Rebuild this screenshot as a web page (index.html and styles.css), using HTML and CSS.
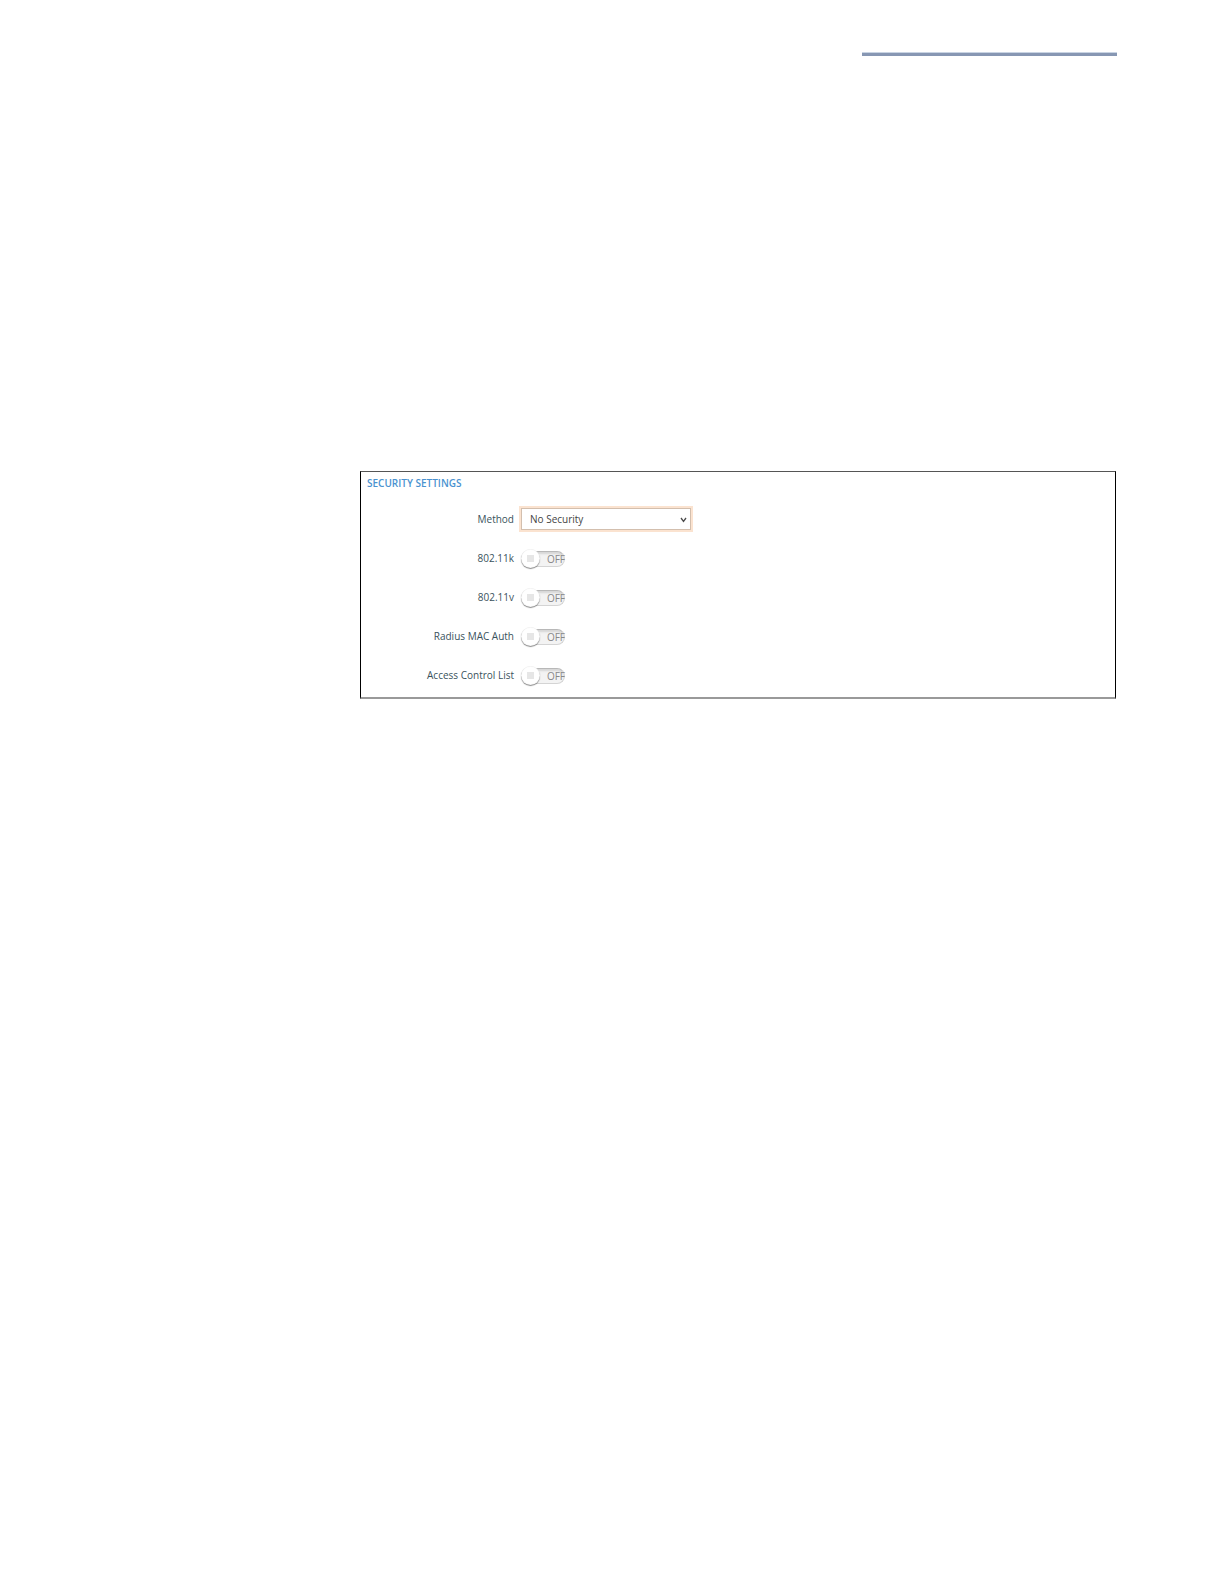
FILE: index.html
```html
<!DOCTYPE html>
<html lang="en">
<head>
    <meta charset="UTF-8">
    <meta name="viewport" content="width=device-width, initial-scale=1.0">
    <title>Security Settings</title>
    <link rel="stylesheet" href="styles.css">
</head>
<body>
    <!-- Header rule -->
    <header class="page-header">
        <hr class="header-rule">
    </header>

    <main class="content">
        <form class="panel">
            <h1>SECURITY SETTINGS</h1>

            <div class="row">
                <label for="method">Method</label>
                <div class="select-wrap">
                    <select id="method">
                        <option>No Security</option>
                    </select>
                    <svg class="arrow" viewBox="0 0 7 6" aria-hidden="true">
                        <path d="M1 1 L3.5 4.4 L6 1" fill="none" stroke="#4c4c4c" stroke-width="1.3"/>
                    </svg>
                </div>
            </div>

            <!-- Switches -->
            <div class="row">
                <label for="dot11k">802.11k</label>
                <div class="switch">
                    <input type="checkbox" id="dot11k">
                    <span class="state">OFF</span>
                </div>
            </div>
            <div class="row">
                <label for="dot11v">802.11v</label>
                <div class="switch">
                    <input type="checkbox" id="dot11v">
                    <span class="state">OFF</span>
                </div>
            </div>
            <div class="row">
                <label for="macAuth">Radius MAC Auth</label>
                <div class="switch">
                    <input type="checkbox" id="macAuth">
                    <span class="state">OFF</span>
                </div>
            </div>
            <div class="row">
                <label for="acl">Access Control List</label>
                <div class="switch">
                    <input type="checkbox" id="acl">
                    <span class="state">OFF</span>
                </div>
            </div>
        </form>
    </main>
</body>
</html>
```

FILE: styles.css
```css
* {
    box-sizing: border-box;
}

body {
    margin: 0;
    background-color: #ffffff;
    font-family: "Open Sans", sans-serif;
    font-size: 10px;
    line-height: 16px;
    color: #3a525c;
}

/* Header */
.page-header {
    padding: 52px 107px 0 0;
}

.header-rule {
    width: 255px;
    height: 4px;
    margin: 0 0 0 auto;
    border: 0;
    border-top: 1px solid #c9d4e3;
    background-color: #8797b3;
}

.content {
    padding: 415px 108px 0 360px;
}

/* Settings panel */
.panel {
    border: 1px solid #000000;
    border-top-color: #555555;
    border-bottom: 2px solid #999999;
    padding-bottom: 3px;
}

h1 {
    margin: 0;
    padding: 3px 6px 8px;
    font-size: 10px;
    line-height: 16px;
    font-weight: 600;
    color: #4a92d0;
}

.row {
    display: grid;
    grid-template-columns: 153px 1fr;
    column-gap: 7px;
    align-items: center;
    height: 39px;
}

.row label {
    text-align: right;
}

/* Method drop-down */
.select-wrap {
    position: relative;
    width: 170px;
    height: 22px;
}

.select-wrap select {
    appearance: none;
    display: block;
    width: 100%;
    height: 100%;
    padding: 0 8px;
    border: 1px solid #d3bfae;
    border-radius: 0;
    outline: 0;
    box-shadow: 0 0 0 2px #fbe3d0;
    background-color: #ffffff;
    font: inherit;
    color: #444444;
}

.arrow {
    position: absolute;
    top: 9px;
    right: 4px;
    width: 7px;
    height: 6px;
    pointer-events: none;
}

/* On/off switch */
.switch {
    position: relative;
    width: 44px;
    height: 16px;
    margin-top: 2px;
}

.switch input {
    appearance: none;
    display: block;
    width: 100%;
    height: 100%;
    margin: 0;
    border: 1px solid #d4d4d4;
    border-top-color: #b8b8b8;
    border-radius: 8px;
    background-color: #f3f3f3;
    box-shadow: inset 0 2px 2px #d6d6d6;
    cursor: pointer;
}

/* Knob */
.switch input::before {
    content: "";
    position: absolute;
    top: -2px;
    left: 0;
    width: 19px;
    height: 19px;
    border-radius: 50%;
    background: linear-gradient(#e6e6e6, #e6e6e6) center / 7px 7px no-repeat #ffffff;
    box-shadow: 0 1px 1px #8c8c8c, inset 0 0 1px #cccccc;
}

.switch .state {
    position: absolute;
    top: 0;
    right: 0;
    color: #888888;
    pointer-events: none;
}
```
